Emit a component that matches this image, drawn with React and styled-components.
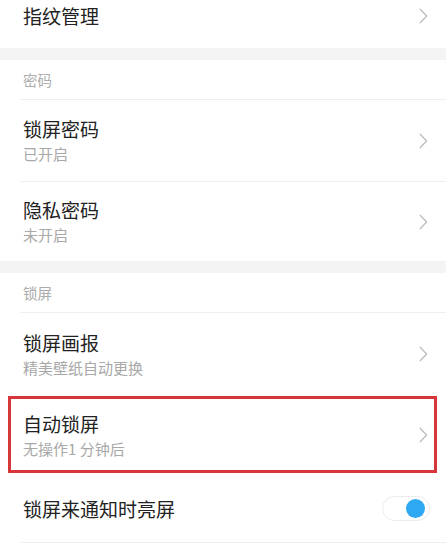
import styled, { createGlobalStyle } from 'styled-components'

const GlobalStyle = createGlobalStyle`
  *, *::before, *::after {
    box-sizing: border-box;
  }
  html, body {
    margin: 0;
    padding: 0;
    background: #ffffff;
  }
  body {
    font-family: "Noto Sans CJK SC", "Noto Sans", sans-serif;
    overflow: hidden;
  }
`

const Page = styled.div`
  width: 446px;
  height: 547px;
  overflow: hidden;
  background: #fff;
  display: flex;
  flex-direction: column;
`

const Band = styled.div`
  height: 12px;
  background: #f4f4f4;
  flex-shrink: 0;
`

const Header = styled.div`
  height: 40px;
  display: flex;
  align-items: center;
  font-size: 14.5px;
  color: #acacac;
  border-bottom: 1px solid #efefef;
  margin-left: 20px;
  padding-left: 3px;
  flex-shrink: 0;
`

const Row = styled.div`
  position: relative;
  height: ${p => p.$h}px;
  padding-top: ${p => p.$top || 0}px;
  display: flex;
  align-items: ${p => p.$align || 'center'};
  justify-content: space-between;
  margin-left: 20px;
  padding-left: 3px;
  padding-right: 18px;
  border-bottom: ${p => (p.$line ? '1px solid #efefef' : 'none')};
  flex-shrink: 0;

  ${p =>
    p.$highlight &&
    `
    &::after {
      content: '';
      position: absolute;
      left: -12px;
      right: 9px;
      top: 1px;
      bottom: 2px;
      border: 3px solid #d6363a;
    }
  `}
`

const ChevronBox = styled.div`
  display: flex;
  padding-top: ${p => p.$top || 0}px;
`

const Texts = styled.div`
  display: flex;
  flex-direction: column;
  gap: 3px;
`

const Title = styled.div`
  font-size: 19px;
  line-height: 24px;
  font-weight: 400;
  color: #222;
`

const Sub = styled.div`
  font-size: 15px;
  line-height: 20px;
  color: #a8a8a8;
`

const Chevron = () => (
  <svg width="9" height="16" viewBox="0 0 9 16" fill="none">
    <path d="M1.2 1.2 L7.6 8 L1.2 14.8" stroke="#bdbdbd" strokeWidth="1.3" strokeLinecap="round" strokeLinejoin="round" />
  </svg>
)

const Toggle = styled.div`
  width: 48px;
  height: 25px;
  border-radius: 13px;
  border: 1px solid #ececec;
  background: #fff;
  display: flex;
  align-items: center;
  justify-content: flex-end;
  padding-right: 4px;
  margin-right: -2px;
`

const Knob = styled.div`
  width: 19px;
  height: 19px;
  border-radius: 50%;
  background: #2fa8f3;
`

function Item({ title, sub, h, line, highlight }) {
  return (
    <Row $h={h} $line={line} $highlight={highlight}>
      <Texts>
        <Title>{title}</Title>
        {sub && <Sub>{sub}</Sub>}
      </Texts>
      <ChevronBox>
        <Chevron />
      </ChevronBox>
    </Row>
  )
}

export default function App() {
  return (
    <Page>
      <GlobalStyle />
      <Row $h={48} $align="flex-start" $top={4}>
        <Title>指纹管理</Title>
        <ChevronBox $top={4}>
          <Chevron />
        </ChevronBox>
      </Row>
      <Band />
      <Header>密码</Header>
      <Item title="锁屏密码" sub="已开启" h={82} line />
      <Item title="隐私密码" sub="未开启" h={79} />
      <Band />
      <Header>锁屏</Header>
      <Item title="锁屏画报" sub="精美壁纸自动更换" h={82} />
      <Item title="自动锁屏" sub="无操作1 分钟后" h={80} highlight />
      <Row $h={68} $line>
        <Title>锁屏来通知时亮屏</Title>
        <Toggle>
          <Knob />
        </Toggle>
      </Row>
    </Page>
  )
}
